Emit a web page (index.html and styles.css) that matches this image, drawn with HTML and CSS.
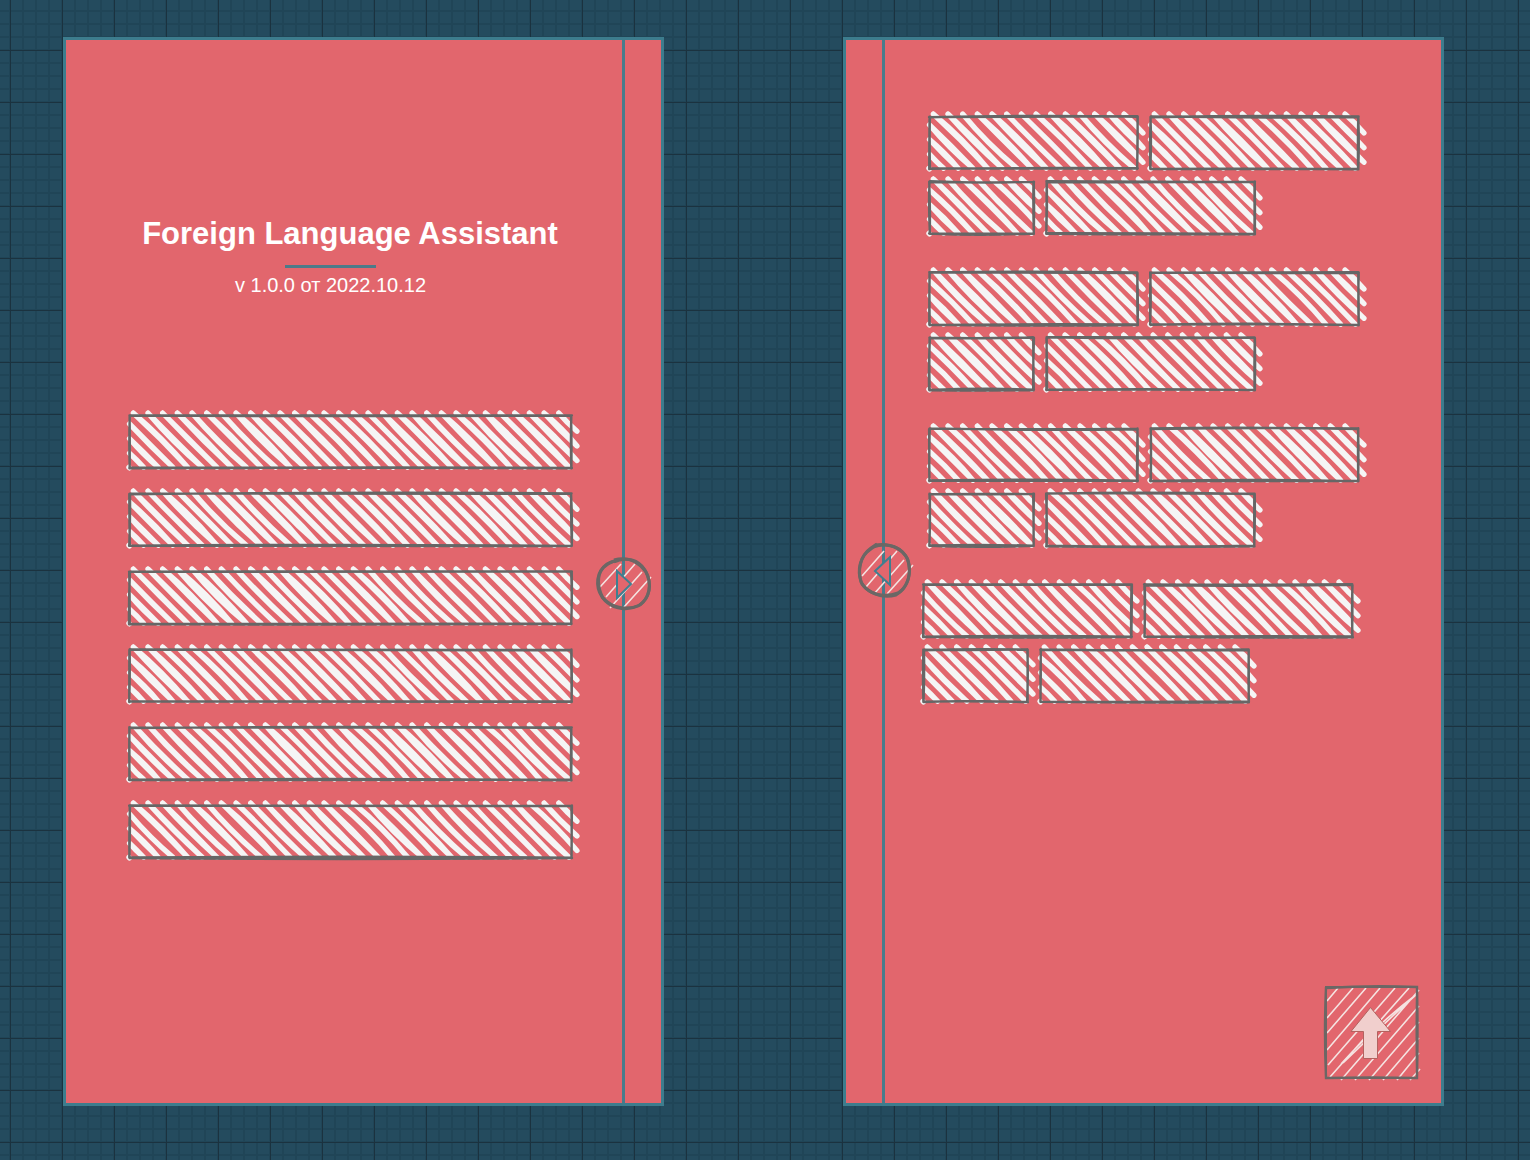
FILE: index.html
```html
<!DOCTYPE html>
<html lang="ru">
<head>
<meta charset="utf-8">
<meta name="viewport" content="width=device-width, initial-scale=1">
<title>Foreign Language Assistant</title>
<link rel="stylesheet" href="styles.css">
</head>
<body>
<main class="board">
  <section class="screen screen-menu">
    <div class="content">
      <header class="heading">
        <h1 class="title">Foreign Language Assistant</h1>
        <div class="about">
          <hr class="rule">
          <p class="version">v 1.0.0 от 2022.10.12</p>
        </div>
      </header>
      <ul class="menu">
        <li class="sketch"></li>
        <li class="sketch"></li>
        <li class="sketch"></li>
        <li class="sketch"></li>
        <li class="sketch"></li>
        <li class="sketch"></li>
      </ul>
    </div>
    <div class="edge">
      <button class="toggle toggle-open" type="button" aria-label="Open">
        <svg width="68" height="68" viewBox="0 0 68 68" fill="none">
          <path d="M10 37 31 14M16 47 45 14M20 58 52 22M34 57 61 27" stroke="#f5e3e1" stroke-width="1.6"/>
          <path d="M27 21V48L41 34Z" fill="#e2666d" stroke="#3f7f90" stroke-width="2"/>
          <path d="M24 12C36 6 49 10 55 20C63 34 60 49 48 56C35 62 20 58 12 47C5 36 6 22 17 14Q22 11 30 10" stroke="#6b6765" stroke-width="3"/>
          <path d="M24 10C38 6 49 12 56 22C62 34 60 47 50 55C37 61 22 58 13 48C7 37 7 25 13 18Q18 13 25 11" stroke="#6b6765" stroke-width="3"/>
        </svg>
      </button>
    </div>
  </section>

  <section class="screen screen-list">
    <div class="edge">
      <button class="toggle toggle-close" type="button" aria-label="Close">
        <svg width="68" height="68" viewBox="0 0 68 68" fill="none">
          <path d="M10 40 32 15M14 51 45 15M22 58 52 24M35 58 61 29" stroke="#f5e3e1" stroke-width="1.6"/>
          <path d="M38 21V49L23 35Z" fill="#e2666d" stroke="#3f7f90" stroke-width="2"/>
          <path d="M21 11C36 6 50 11 56 24C60 37 56 52 44 59C30 63 15 57 9 46C5 34 8 20 19 12L25 8" stroke="#6b6765" stroke-width="3"/>
          <path d="M23 9C38 7 49 12 55 22C60 36 57 50 46 57C32 62 18 59 10 48C5 36 8 23 15 16L24 9" stroke="#6b6765" stroke-width="3"/>
        </svg>
      </button>
    </div>
    <div class="content">
      <div class="group">
        <div class="line"><span class="sketch wide"></span><span class="sketch wide"></span></div>
        <div class="line"><span class="sketch small"></span><span class="sketch wide"></span></div>
      </div>
      <div class="group">
        <div class="line"><span class="sketch wide"></span><span class="sketch wide"></span></div>
        <div class="line"><span class="sketch small"></span><span class="sketch wide"></span></div>
      </div>
      <div class="group">
        <div class="line"><span class="sketch wide"></span><span class="sketch wide"></span></div>
        <div class="line"><span class="sketch small"></span><span class="sketch wide"></span></div>
      </div>
      <div class="group group-last">
        <div class="line"><span class="sketch wide"></span><span class="sketch wide"></span></div>
        <div class="line"><span class="sketch small"></span><span class="sketch wide"></span></div>
      </div>
      <button class="to-top" type="button" aria-label="Up">
        <svg width="96" height="96" viewBox="0 0 96 96" fill="none">
          <path d="M2 15 13 2M2 32 28 2M2 47 41 2M2 64 55 2M3 79 70 2M5 91 84 2M16 78Q50 40 92 8M18 77Q54 42 91 9M16 94 94 4M30 94 94 20M44 94 94 36M58 94 94 52M72 94 94 67M85 94 95 83" stroke="#f5e3e1" stroke-width="1.6"/>
          <path d="M1 2Q45 -1 92 1Q93 45 92 92Q45 91 1 92Q-1 45 1 1Z" stroke="#6b6765" stroke-width="2.4"/>
          <path d="M1 1 92 1Q91 50 92 92L1 92Q1 60 1 1Z" stroke="#6b6765" stroke-width="2"/>
          <path d="M45.500 21.500 65.500 45.500H52.500V72.500H38.500V45.500H26Z" fill="#f1cfcd" stroke="#b3625f"/>
        </svg>
      </button>
    </div>
  </section>
</main>
<script src="script.js"></script>
</body>
</html>
```
FILE: styles.css
```css
* { box-sizing: border-box; }

body {
  margin: 0;
  min-height: 100vh;
  color: #fff;
  font-family: "Liberation Sans", Helvetica, Arial, sans-serif;
  background-color: #244b5e;
  background-image:
    linear-gradient(90deg, #1b323f 1px, transparent 1px),
    linear-gradient(#1b323f 1px, transparent 1px),
    linear-gradient(90deg, #204557 2px, transparent 2px),
    linear-gradient(#204557 2px, transparent 2px);
  background-size: 52px 52px, 52px 52px, 13px 13px, 13px 13px;
  background-position: 10px 0, 0 50px, 9px 0, 0 10px;
}

ul, p, h1 { margin: 0; padding: 0; }

.board {
  display: grid;
  grid-template-columns: 1fr 1fr;
  gap: 179px;
  padding: 37px 86px 54px 63px;
}

.screen {
  display: grid;
  min-height: calc(100vh - 91px);
  background: #e2666d;
  border: 3px solid #3d7c8d;
}

.screen-menu { grid-template-columns: 1fr 39px; }
.screen-list { grid-template-columns: 39px 1fr; }

.edge { position: relative; }
.screen-menu .edge { border-left: 3px solid #477c8c; }
.screen-list .edge { border-right: 3px solid #477c8c; }

.screen-menu .content { padding: 176px 51px 26px 63px; }
.screen-list .content { position: relative; padding: 76px 26px 26px 44px; }

.heading { text-align: center; }
.title { font-size: 31px; line-height: 36px; font-weight: 700; white-space: nowrap; }

.about { padding-right: 39px; }
.rule {
  width: 91px;
  height: 3px;
  margin: 13px auto 5px;
  border: 0;
  background: #4c7a89;
}
.version { font-size: 20px; line-height: 24px; }

.menu {
  display: grid;
  gap: 26px;
  margin-top: 118px;
  list-style: none;
}

.group { display: grid; gap: 13px; margin-bottom: 39px; }
.group-last { margin-left: -6px; }
.line { display: flex; gap: 13px; }

.sketch { display: block; position: relative; height: 52px; }
.wide { width: 208px; }
.small { width: 104px; }

.sketch svg {
  position: absolute;
  inset: 0;
  width: 100%;
  height: 100%;
  overflow: visible;
}

button { padding: 0; border: 0; background: none; cursor: pointer; }
button svg { display: block; overflow: visible; }

.toggle { position: absolute; width: 68px; height: 68px; }
.toggle-open { top: 510px; left: -35px; }
.toggle-close { top: 496px; left: 6px; }

.to-top { position: absolute; right: 20px; bottom: 21px; }
```
FILE: script.js
```js
// Hand-drawn boxes: diagonal marker hatching under a loose double outline.
const NS = "http://www.w3.org/2000/svg";
const STEP = 14.67;

function generator(seed) {
  let s = seed * 7919 + 17;
  return () => {
    s = (s * 16807) % 2147483647;
    return s / 2147483647;
  };
}

function addPath(group, d, color, width) {
  const path = document.createElementNS(NS, "path");
  path.setAttribute("d", d);
  path.setAttribute("fill", "none");
  path.setAttribute("stroke", color);
  path.setAttribute("stroke-width", width);
  path.setAttribute("stroke-linecap", "round");
  group.appendChild(path);
}

function drawBox(el, index) {
  const w = el.clientWidth;
  const h = el.clientHeight;
  const random = generator(index + 1);
  const wobble = (n) => (random() * 2 - 1) * n;
  const svg = document.createElementNS(NS, "svg");
  svg.setAttribute("aria-hidden", "true");
  const group = document.createElementNS(NS, "g");
  group.setAttribute("transform", "translate(0.5 0.8)");
  svg.appendChild(group);

  let hatch = "";
  for (let c = 6.6 - 4 * STEP; c - 3 < w; c += STEP) {
    const x1 = Math.max(0, c - 2.8);
    const x2 = Math.min(w + 5.5, c + h - 0.5);
    for (let pass = 0; pass < 2; pass++) {
      const b = wobble((x2 - x1) / 20);
      hatch += `M${x1} ${x1 - c}Q${(x1 + x2) / 2 + b} ${(x1 + x2) / 2 - c - b} ${x2} ${x2 - c}`;
    }
  }
  addPath(group, hatch, "#f5f5f5", 5.2);

  const corners = [[0, 0], [w, 0], [w, h], [0, h]];
  let outline = "";
  for (let pass = 0; pass < 2; pass++) {
    corners.forEach(([x, y], i) => {
      const [nx, ny] = corners[(i + 1) % 4];
      const bow = Math.abs(nx - x) > h ? 2.2 : 1;
      outline += `M${x + wobble(0.5)} ${y + wobble(0.5)}`
        + `Q${(x + nx) / 2 + wobble(1)} ${(y + ny) / 2 + wobble(bow)} ${nx + wobble(0.5)} ${ny + wobble(0.5)}`;
    });
  }
  addPath(group, outline, "#666", 2.4);
  el.replaceChildren(svg);
}

function drawAll() {
  document.querySelectorAll(".sketch").forEach(drawBox);
}

drawAll();
window.addEventListener("resize", drawAll);
```
